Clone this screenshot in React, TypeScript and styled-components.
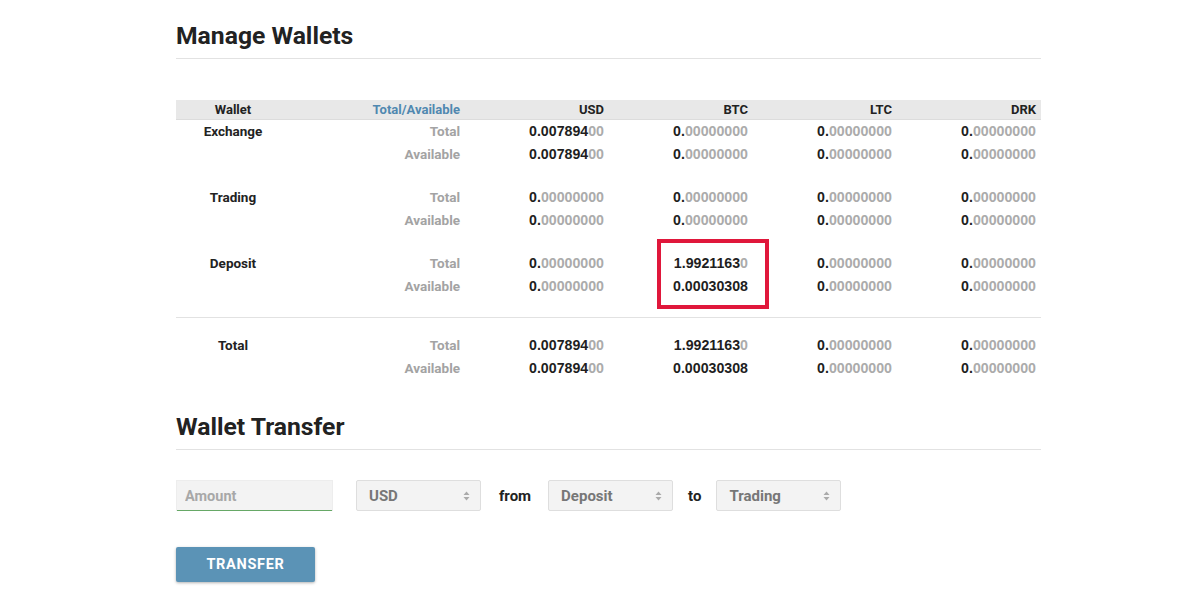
import React from 'react';
import styled, { createGlobalStyle } from 'styled-components';

const GlobalStyle = createGlobalStyle`
  body {
    margin: 0;
    background: #fff;
    font-family: Roboto, "Liberation Sans", sans-serif;
    color: #222;
  }
`;

const Page = styled.div`
  width: 865px;
  margin-left: 176px;
  padding-top: 18px;
  padding-bottom: 10px;
`;

const SectionTitle = styled.h2<{ $top?: number }>`
  margin: ${(p) => p.$top || 0}px 0 0;
  padding-bottom: 4px;
  border-bottom: 1px solid #e2e2e2;
  font-size: 24.7px;
  line-height: 36px;
  font-weight: 700;
  color: #222;
`;

const Table = styled.div`
  margin-top: 41px;
`;

const cols = '114px 176px repeat(4, 144px)';

const HeadRow = styled.div`
  display: grid;
  grid-template-columns: ${cols};
  height: 19px;
  align-items: center;
  background: #e8e8e8;
  border-bottom: 1px solid #dcdcdc;
  font-size: 13px;
  font-weight: 700;
`;

const HeadCell = styled.div<{ $align?: string; $blue?: boolean }>`
  text-align: ${(p) => p.$align || 'right'};
  padding-right: ${(p) => (p.$align === 'center' ? 0 : 6)}px;
  color: ${(p) => (p.$blue ? '#5088b0' : '#222')};
`;

const Group = styled.div<{ $gap: number }>`
  display: grid;
  grid-template-columns: ${cols};
  grid-auto-rows: 23px;
  align-items: center;
  margin-top: ${(p) => p.$gap}px;
  font-size: 13.5px;
  font-weight: 700;
`;

const WalletName = styled.div`
  grid-row: 1;
  text-align: center;
  color: #222;
`;

const Label = styled.div`
  text-align: right;
  padding-right: 6px;
  color: #a3a3a3;
`;

const Amount = styled.div`
  position: relative;
  text-align: right;
  padding-right: 6px;
  font-family: "Liberation Sans", Arial, sans-serif;
  font-size: 14.2px;
  color: #1e1e1e;
`;

const Faded = styled.span`
  color: #ababab;
`;

const Highlight = styled.div`
  position: absolute;
  left: 47px;
  top: -16px;
  width: 112px;
  height: 70px;
  box-sizing: border-box;
  border: 4px solid #e0173b;
  pointer-events: none;
`;

const Divider = styled.div`
  margin-top: 20px;
  border-top: 1px solid #e2e2e2;
`;

const FormRow = styled.div`
  display: flex;
  align-items: center;
  margin-top: 30px;
`;

const AmountInput = styled.input`
  width: 157px;
  height: 31px;
  box-sizing: border-box;
  border: 1px solid #ededed;
  border-bottom: none;
  box-shadow: inset 0 -1px 0 #66a866;
  background: #f3f3f3;
  padding: 0 8px;
  font-family: Roboto, sans-serif;
  font-size: 14.5px;
  font-weight: 700;
  color: #555;
  outline: none;
  &::placeholder {
    color: #a8a8a8;
  }
`;

const Select = styled.div<{ $ml: number }>`
  display: flex;
  align-items: center;
  justify-content: space-between;
  width: 125px;
  height: 31px;
  box-sizing: border-box;
  margin-left: ${(p) => p.$ml}px;
  padding: 0 10px 0 12px;
  border: 1px solid #dedede;
  border-radius: 2px;
  background: #f3f3f3;
  font-size: 15px;
  font-weight: 700;
  color: #777;
`;

const Arrows = styled.svg`
  width: 7px;
  height: 10px;
`;

const Word = styled.span<{ $ml: number }>`
  margin-left: ${(p) => p.$ml}px;
  font-size: 15px;
  font-weight: 700;
  color: #222;
`;

const Button = styled.button`
  display: block;
  margin-top: 36px;
  width: 139px;
  height: 35px;
  border: none;
  border-radius: 2px;
  background: #5b93b6;
  box-shadow: 0 1px 3px rgba(0, 0, 0, 0.3);
  color: #fff;
  font-family: Roboto, sans-serif;
  font-size: 14.5px;
  font-weight: 700;
  letter-spacing: 0.7px;
`;

const Num: React.FC<{ bold: string; faded?: string }> = ({ bold, faded }) => (
  <>
    {bold}
    {faded && <Faded>{faded}</Faded>}
  </>
);

type Val = [string, string?];
const zero: Val = ['0.', '00000000'];

interface WalletRow {
  name: string;
  total: Val[];
  avail: Val[];
  gap: number;
  mark?: boolean;
}

const rows: WalletRow[] = [
  { name: 'Exchange', total: [['0.007894', '00'], zero, zero, zero], avail: [['0.007894', '00'], zero, zero, zero], gap: -1 },
  { name: 'Trading', total: [zero, zero, zero, zero], avail: [zero, zero, zero, zero], gap: 20 },
  { name: 'Deposit', total: [zero, ['1.9921163', '0'], zero, zero], avail: [zero, ['0.00030308'], zero, zero], gap: 20, mark: true },
];

const totals: WalletRow = {
  name: 'Total',
  total: [['0.007894', '00'], ['1.9921163', '0'], zero, zero],
  avail: [['0.007894', '00'], ['0.00030308'], zero, zero],
  gap: 15,
};

const SelectArrows = () => (
  <Arrows viewBox="0 0 7 10">
    <path d="M3.5 0.5 L6.5 4 H0.5 Z M3.5 9.5 L6.5 6 H0.5 Z" fill="#aaa" />
  </Arrows>
);

const renderGroup = (r: WalletRow) => (
  <Group $gap={r.gap} key={r.name}>
    <WalletName>{r.name}</WalletName>
    <Label style={{ gridColumn: 2, gridRow: 1 }}>Total</Label>
    {r.total.map((v, i) => (
      <Amount key={'t' + i} style={{ gridColumn: i + 3, gridRow: 1 }}>
        <Num bold={v[0]} faded={v[1]} />
        {r.mark && i === 1 && <Highlight />}
      </Amount>
    ))}
    <Label style={{ gridColumn: 2, gridRow: 2 }}>Available</Label>
    {r.avail.map((v, i) => (
      <Amount key={'a' + i} style={{ gridColumn: i + 3, gridRow: 2 }}>
        <Num bold={v[0]} faded={v[1]} />
      </Amount>
    ))}
  </Group>
);

export default function App() {
  return (
    <>
      <GlobalStyle />
      <Page>
        <SectionTitle>Manage Wallets</SectionTitle>
        <Table>
          <HeadRow>
            <HeadCell $align="center">Wallet</HeadCell>
            <HeadCell $blue>Total/Available</HeadCell>
            <HeadCell>USD</HeadCell>
            <HeadCell>BTC</HeadCell>
            <HeadCell>LTC</HeadCell>
            <HeadCell>DRK</HeadCell>
          </HeadRow>
          {rows.map(renderGroup)}
          <Divider />
          {renderGroup(totals)}
        </Table>

        <SectionTitle $top={30}>Wallet Transfer</SectionTitle>
        <FormRow>
          <AmountInput placeholder="Amount" />
          <Select $ml={23}>
            USD
            <SelectArrows />
          </Select>
          <Word $ml={18}>from</Word>
          <Select $ml={17}>
            Deposit
            <SelectArrows />
          </Select>
          <Word $ml={15}>to</Word>
          <Select $ml={15}>
            Trading
            <SelectArrows />
          </Select>
        </FormRow>
        <Button>TRANSFER</Button>
      </Page>
    </>
  );
}
